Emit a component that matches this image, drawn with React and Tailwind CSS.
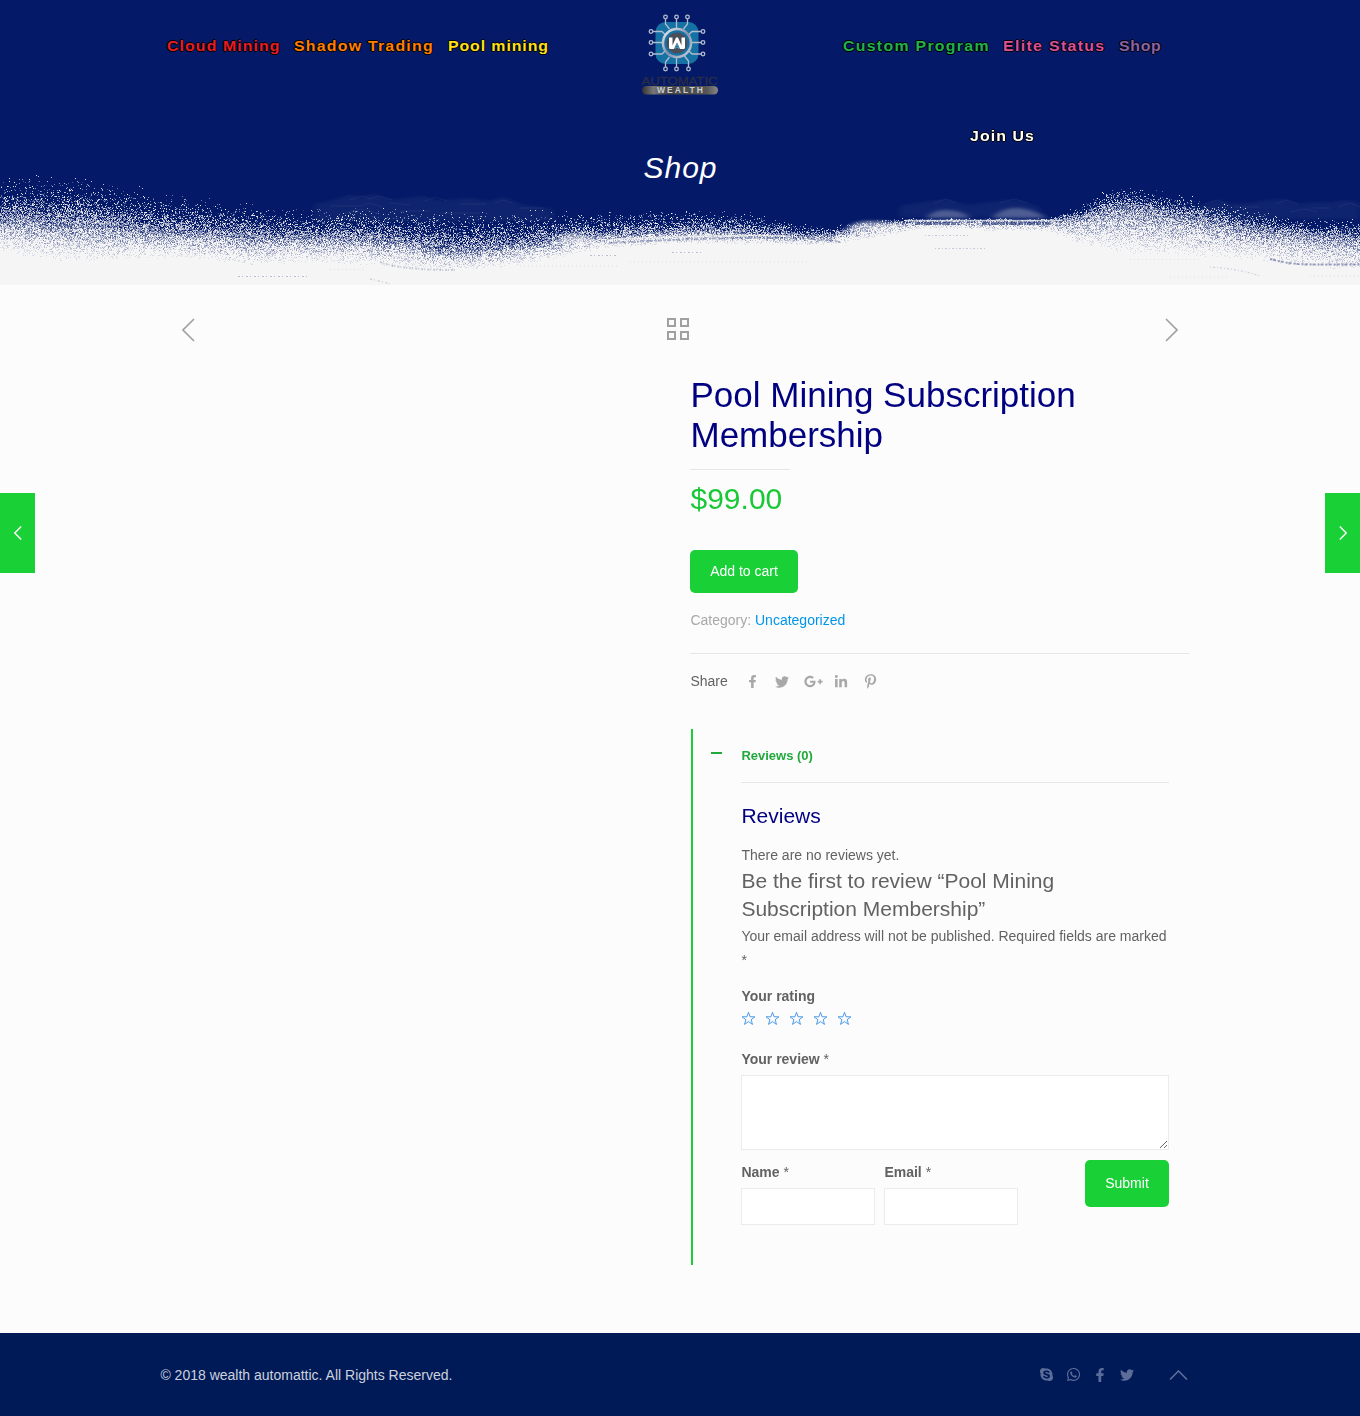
import React from "react";
import { FaFacebookF, FaTwitter, FaGooglePlusG, FaLinkedinIn, FaPinterestP, FaSkype, FaWhatsapp } from "react-icons/fa";

// Spray profile along the banner: [x, first specks, half covered, fully covered]
const PROFILE = [
  [0, 170, 219, 256], [60, 170, 222, 266], [100, 176, 224, 266], [150, 186, 230, 262],
  [200, 194, 233, 262], [250, 200, 236, 269], [300, 206, 237, 266], [350, 202, 237, 267],
  [400, 203, 241, 270], [450, 204, 251, 273], [500, 206, 247, 270], [550, 206, 240, 262],
  [600, 207, 235, 250], [650, 207, 232, 247], [700, 205, 231, 245], [750, 209, 232, 246],
  [790, 219, 235, 246], [830, 225, 235, 247], [860, 219, 226, 242], [900, 217, 222, 235],
  [920, 217, 220, 230], [1050, 217, 220, 234], [1080, 202, 217, 248], [1110, 184, 207, 256],
  [1130, 184, 207, 260], [1160, 188, 211, 260], [1200, 196, 218, 261], [1250, 207, 227, 265],
  [1300, 215, 233, 271], [1360, 215, 238, 274],
];

function profileAt(x) {
  let i = 0;
  while (i < PROFILE.length - 2 && PROFILE[i + 1][0] <= x) i++;
  const a = PROFILE[i];
  const b = PROFILE[i + 1];
  const t = (x - a[0]) / (b[0] - a[0]);
  return [1, 2, 3].map((k) => a[k] + (b[k] - a[k]) * t);
}

const LEVELS = [0.15, 0.3, 0.45, 0.6, 0.75, 0.88, 1];

function buildSpray() {
  let seed = 987654321;
  const rnd = () => {
    seed = (Math.imul(seed, 1664525) + 1013904223) >>> 0;
    return seed / 4294967296;
  };
  const layers = LEVELS.map(() => "");
  let solid = "M0 285";
  for (let x = 0; x < 1360; x++) {
    const [top, mid, full] = profileAt(x);
    const edge = Math.ceil(full);
    solid += `V${edge}h1`;
    for (let y = Math.floor(top); y < edge; y++) {
      let alpha;
      if (y < mid) {
        const cover = 0.55 * Math.pow(Math.max(0, (y - top) / (mid - top)), 2);
        alpha = rnd() < cover * 1.75 ? 0.1 + 0.8 * rnd() : 0;
      } else {
        const t = (y - mid) / (full - mid);
        alpha = 1 - Math.pow(rnd(), 0.7 + 3 * t) * Math.pow(1 - t, 0.9);
      }
      if (alpha > 0.05) {
        layers[Math.min(6, Math.floor(alpha * 7))] += `M${x} ${y}h1v1h-1z`;
      }
    }
  }
  return { layers, solid: solid + "V285z" };
}

const SPRAY = buildSpray();

function Splash() {
  return (
    <svg className="block h-[125px] w-[1360px]" viewBox="0 160 1360 125">
      <defs>
        <filter id="mist" x="-20%" y="-50%" width="140%" height="200%"><feGaussianBlur stdDeviation="3 1.500" /></filter>
      </defs>
      <g fill="#f5f5f5" filter="url(#mist)">
        <path opacity=".05" d="M315 204l20-4 14-5 14 2 10-3 20 6 30-4 16 5 30-3 20 3 14-4 20 8 30 4v12H315z" />
        <path opacity=".28" d="M926 218q8-9 22-8q16 1 22 8zM992 218q10-11 26-10q14 1 30 10z" />
        <path opacity=".5" d="M555 244q6-12 20-11q14 2 24 10zM845 230q8-9 24-9q20 0 30 3v6z" />
        <path opacity=".05" d="M1190 208l16-4 12-4 12 4 20-1 20-3 14-1 14 5 20-2 12 1 14-3 16 3v16h-160zM900 206l38-6 10 0 20 5 40-5 12 1 20 6v10H900z" />
      </g>
      <g fill="none" stroke="#f5f5f5" opacity=".06">
        <path d="M350 200l12-4 8 3 8-3 14 4M390 203l20 2M425 201l10-4 12 4M330 206h30l10-3 12 4M345 213l16-4 16 4M460 204h26M495 203l8-3 10 3M520 208h24M400 211h30M440 213h40M934 203l12-4 10 4M1000 203l14-4 14 4M1205 204l12-4 10 4M1235 207h24M1276 204l10-4 12 4M1310 208h20M1338 207l12-4 10 4M1290 212l14-3 14 3" />
      </g>
      <path d={SPRAY.solid} fill="#f5f5f5" shapeRendering="crispEdges" />
      {SPRAY.layers.map((d, i) => (
        <path key={i} d={d} fill="#f5f5f5" opacity={LEVELS[i]} shapeRendering="crispEdges" />
      ))}
      <g fill="none" stroke="#041a68">
        <path d="M915 223.500H960M982 223.500H1050" strokeWidth="3" strokeDasharray="5 1 2 1 8 1" opacity=".5" />
        <path d="M610 243Q720 237 780 238T840 243" strokeWidth="2" strokeDasharray="2 1 4 2" opacity=".3" />
        <path d="M380 262Q400 270 455 270" strokeWidth="2" strokeDasharray="2 1 1 2" opacity=".2" />
        <path d="M1270 259Q1290 264.500 1310 264.500H1360" strokeWidth="2" strokeDasharray="2 1 3 2" opacity=".4" />
        <path d="M238 276.500H308M590 255.500H616M672 252.500H702M370 279Q380 281 390 284" strokeDasharray="2 2 1 3" opacity=".25" />
        <path d="M925 235.500H970M935 248.500H985M1210 267Q1240 269 1260 276" strokeDasharray="1 2 2 2" opacity=".2" />
        <path d="M330 269.500H365M520 266H620M630 262H810M1130 259.500H1200M1170 277H1230M1310 276H1360" strokeDasharray="1 3" opacity=".1" />
      </g>
      <path d="M905 220.500H1062M610 239.500Q720 234 790 236" stroke="#f5f5f5" strokeOpacity=".7" strokeWidth="1.500" fill="none" />
    </svg>
  );
}

function Logo() {
  const node = (x, y) => <circle key={`${x}-${y}`} cx={x} cy={y} r="1.800" />;
  return (
    <svg className="h-[84px] w-[80px]" viewBox="640 12 80 84">
      <defs>
        <linearGradient id="bar"><stop offset="0" stopColor="#333" /><stop offset=".15" stopColor="#777" /><stop offset=".35" stopColor="#444" /><stop offset=".85" stopColor="#555" /><stop offset="1" stopColor="#888" /></linearGradient>
        <linearGradient id="ring" x2="1" y2="1"><stop offset="0" stopColor="#eef1f5" /><stop offset=".5" stopColor="#8593ab" /><stop offset="1" stopColor="#c8d0dc" /></linearGradient>
      </defs>
      <rect x="655.500" y="22" width="43" height="42" rx="10" fill="#1672a5" />
      <g fill="none" stroke="#b3bccd" strokeWidth="1.300">
        <path d="M665.500 19v5l4 5M676.500 19v9M687.500 19v5l-4 5M665.500 67v-5l4-5M676.500 67v-9M688.500 67v-6l-4-5" />
        <path d="M653 31.500h9l4 4M653 42.500h9M653 54h9l4-4M701 31.500h-9l-4 4M701 42.500h-9M701 54h-9l-4-4" />
        {[[665.5, 17], [676.5, 17], [687.5, 17], [665.5, 69], [676.5, 69], [688.5, 69], [651, 31.5], [651, 42.5], [651, 54], [703, 31.5], [703, 42.5], [703, 54]].map(([x, y]) => node(x, y))}
      </g>
      <circle cx="677" cy="43" r="14" fill="#1672a5" stroke="url(#ring)" strokeWidth="2.500" />
      <circle cx="677" cy="43" r="10.500" fill="#4a4e5a" />
      <path d="M669 37.500h3.500v8l3.500-8h2l3.500 8v-8h3.500v10q0 1.500-1.500 1.500h-3.500l-3-6.500-3 6.500h-3.500q-1.500 0-1.500-1.500z" fill="#fff" />
      <path d="M675 49l2-5 2 5M675.800 47.500h2.400" stroke="#3a9bd0" strokeWidth=".9" fill="none" />
      <text x="641.500" y="84.500" textLength="76" lengthAdjust="spacingAndGlyphs" fontFamily="Liberation Sans" fontSize="11.800" fill="#2b2d45" stroke="#2b2d45" strokeWidth=".3">AUTOMATIC</text>
      <rect x="642" y="86" width="76" height="8.500" rx="4.200" fill="url(#bar)" />
      <text x="657" y="93.200" textLength="46" fontFamily="Liberation Sans" fontSize="8.500" fontWeight="bold" fill="#c9ccd2">WEALTH</text>
    </svg>
  );
}

function NavLink({ className, children }) {
  return (
    <a className={"origin-left scale-x-[1.06] text-[15px] leading-[90px] font-bold whitespace-nowrap [text-shadow:-1px_0_#000,0_1px_#000,1px_0_#000,0_-1px_#000] " + className}>
      {children}
    </a>
  );
}

function Chevron({ className, d = "M12 1L1 12l11 11", box = "0 0 13 24", weight = 1.6 }) {
  return (
    <svg className={className} viewBox={box} fill="none" stroke="currentColor" strokeWidth={weight}><path d={d} /></svg>
  );
}

function Star() {
  return (
    <svg className="h-[15px] w-[15px]" viewBox="0 0 15 15" fill="none" stroke="#3b8ee8" strokeWidth=".9">
      <path d="M7.500 1.300l1.600 4.500h4.800l-3.800 2.900 1.400 4.700-4-2.800-4 2.800 1.400-4.700L1.100 5.800h4.800z" />
    </svg>
  );
}

function Field({ label }) {
  return (
    <div className="w-[134px]">
      <label className="block h-[28px] pl-[0.4px] font-bold leading-[25px]">{label} <span className="font-normal">*</span></label>
      <input className="block h-[37px] w-full border border-[#ebebeb] bg-white" />
    </div>
  );
}

export default function App() {
  return (
    <div className="flex h-[1416px] w-[1360px] flex-col overflow-hidden bg-[#fcfcfc] font-['Liberation_Sans',Arial,sans-serif] text-[14px] leading-[25px] text-[#626262]">
      <header className="relative flex h-[285px] shrink-0 flex-col bg-[#041a68]">
        <div className="flex h-[148px] items-start pl-[167px]">
          <nav className="flex w-[475px] pt-px">
            <NavLink className="w-[127px] tracking-[1.02px] text-[#e81c24]">Cloud Mining</NavLink>
            <NavLink className="w-[154px] tracking-[1.15px] text-[#ff7f00]">Shadow Trading</NavLink>
            <NavLink className="tracking-[0.85px] text-[#ffe01a]">Pool mining</NavLink>
          </nav>
          <div className="-ml-0.5 w-[80px] pt-3"><Logo /></div>
          <nav className="ml-[123px] flex w-[320px] flex-wrap pt-px">
            <NavLink className="w-[160px] tracking-[1.2px] text-[#22b14c]">Custom Program</NavLink>
            <NavLink className="w-[116px] tracking-[1.25px] text-[#d9509b]">Elite Status</NavLink>
            <NavLink className="w-[44px] tracking-[0.65px] text-[#8c62a8]">Shop</NavLink>
            <NavLink className="ml-[127px] tracking-[1px] text-white">Join Us</NavLink>
          </nav>
        </div>
        <h1 className="pl-px text-center text-[30px] leading-[40px] tracking-[1px] text-white italic">Shop</h1>
        <div className="-mt-[28px]"><Splash /></div>
      </header>

      <main className="relative flex h-[1048px] shrink-0 flex-col">
        <div className="absolute top-[208px] left-0 flex h-20 w-[35px] items-center justify-center bg-[#19d037] text-white">
          <Chevron className="h-[14px] w-[8px]" weight={2.4} />
        </div>
        <div className="absolute top-[208px] right-0 flex h-20 w-[35px] items-center justify-center bg-[#19d037] text-white">
          <Chevron className="h-[14px] w-[8px] -scale-x-100" weight={2.4} />
        </div>

        <div className="mx-auto flex h-[90px] w-[996px] items-start justify-between pt-[33px] text-[#a0a0a0]">
          <Chevron className="h-6 w-[13px]" />
          <svg className="-ml-1 h-[22px] w-[22px]" viewBox="0 0 22 22" fill="none" stroke="currentColor" strokeWidth="2">
            <path d="M1 1h7v7H1zM14 1h7v7h-7zM1 14h7v7H1zM14 14h7v7h-7z" />
          </svg>
          <Chevron className="h-6 w-[13px] -scale-x-100" />
        </div>

        <section className="ml-[690px] w-[499px]">
          <h2 className="pl-[0.5px] text-[35px] leading-[40px] text-[#000080]">Pool Mining Subscription Membership</h2>
          <hr className="mt-[14px] w-[100px] border-t border-[#e6e6e6]" />
          <p className="mt-[9px] pl-[0.5px] text-[30px] leading-[40px] text-[#19c837]">$99.00</p>
          <button className="mt-[31px] block h-[43px] w-[108px] rounded-[5px] bg-[#19d037] text-white">Add to cart</button>
          <p className="mt-[15px] pl-[0.4px] text-[#a8a8a8]">Category: <a className="text-[#0095eb]">Uncategorized</a></p>
          <hr className="mt-[20px] border-t border-[#e6e6e6]" />
          <div className="mt-[15px] flex h-[25px] items-center text-[#a8a8a8]">
            <span className="w-[56px] pl-[0.4px] text-[#626262]">Share</span>
            <FaFacebookF className="w-[13px] text-[13px]" />
            <FaTwitter className="ml-[16px] text-[14px]" />
            <FaGooglePlusG className="ml-[15px] text-[19px]" />
            <FaLinkedinIn className="ml-[11px] text-[14px]" />
            <FaPinterestP className="ml-[15px] text-[15px]" />
          </div>

          <div className="mt-[35px] ml-px h-[536px] border-l-2 border-[#19d037] pr-5 pl-[48px]">
            <div className="relative flex h-[54px] items-center border-b border-[#e6e6e6] pl-[0.4px] text-[13px] font-bold text-[#22a93c]">
              <span className="absolute top-[23px] -left-[30px] h-[2px] w-[11px] bg-[#22a93c]" />
              Reviews (0)
            </div>
            <h3 className="mt-[20px] pl-[0.4px] text-[21px] leading-[25px] text-[#000080]">Reviews</h3>
            <p className="mt-[15px] pl-[0.4px]">There are no reviews yet.</p>
            <p className="-mt-px w-[340px] pl-[0.4px] text-[21px] leading-[28px]">Be the first to review “Pool Mining Subscription Membership”</p>
            <p className="mt-px pl-[0.4px]">Your email address will not be published. Required fields are marked <span className="-mt-px block">*</span></p>
            <p className="mt-[11px] pl-[0.4px] font-bold">Your rating</p>
            <div className="mt-[2px] flex h-[15px] gap-[9px]">{[1, 2, 3, 4, 5].map((n) => <Star key={n} />)}</div>
            <label className="mt-[21px] block pl-[0.4px] font-bold">Your review <span className="font-normal">*</span></label>
            <textarea className="mt-[3px] block h-[75px] w-full border border-[#ebebeb] bg-white" />
            <div className="mt-[10px] flex">
              <Field label="Name" />
              <div className="ml-[9px]"><Field label="Email" /></div>
              <button className="ml-auto h-[47px] w-[84px] rounded-[5px] bg-[#19d037] text-white">Submit</button>
            </div>
          </div>
        </section>
      </main>

      <footer className="flex h-[83px] shrink-0 items-center bg-[#001a57] pr-[172px] pl-[160px] text-[#ccd1dd]">
        <p className="pt-[2px] pl-[0.4px]">© 2018 wealth automattic. All Rights Reserved.</p>
        <div className="ml-auto flex items-center text-[14px] text-[#5c6d99]">
          <FaSkype className="text-[15px]" />
          <FaWhatsapp className="ml-[12px] text-[15px]" />
          <FaFacebookF className="ml-[13px] w-3 text-[14px]" />
          <FaTwitter className="ml-[14px]" />
          <Chevron className="ml-[35px] h-[10px] w-[19px]" box="0 0 19 10" d="M1 9.500L9.500 1L18 9.500" />
        </div>
      </footer>
    </div>
  );
}
